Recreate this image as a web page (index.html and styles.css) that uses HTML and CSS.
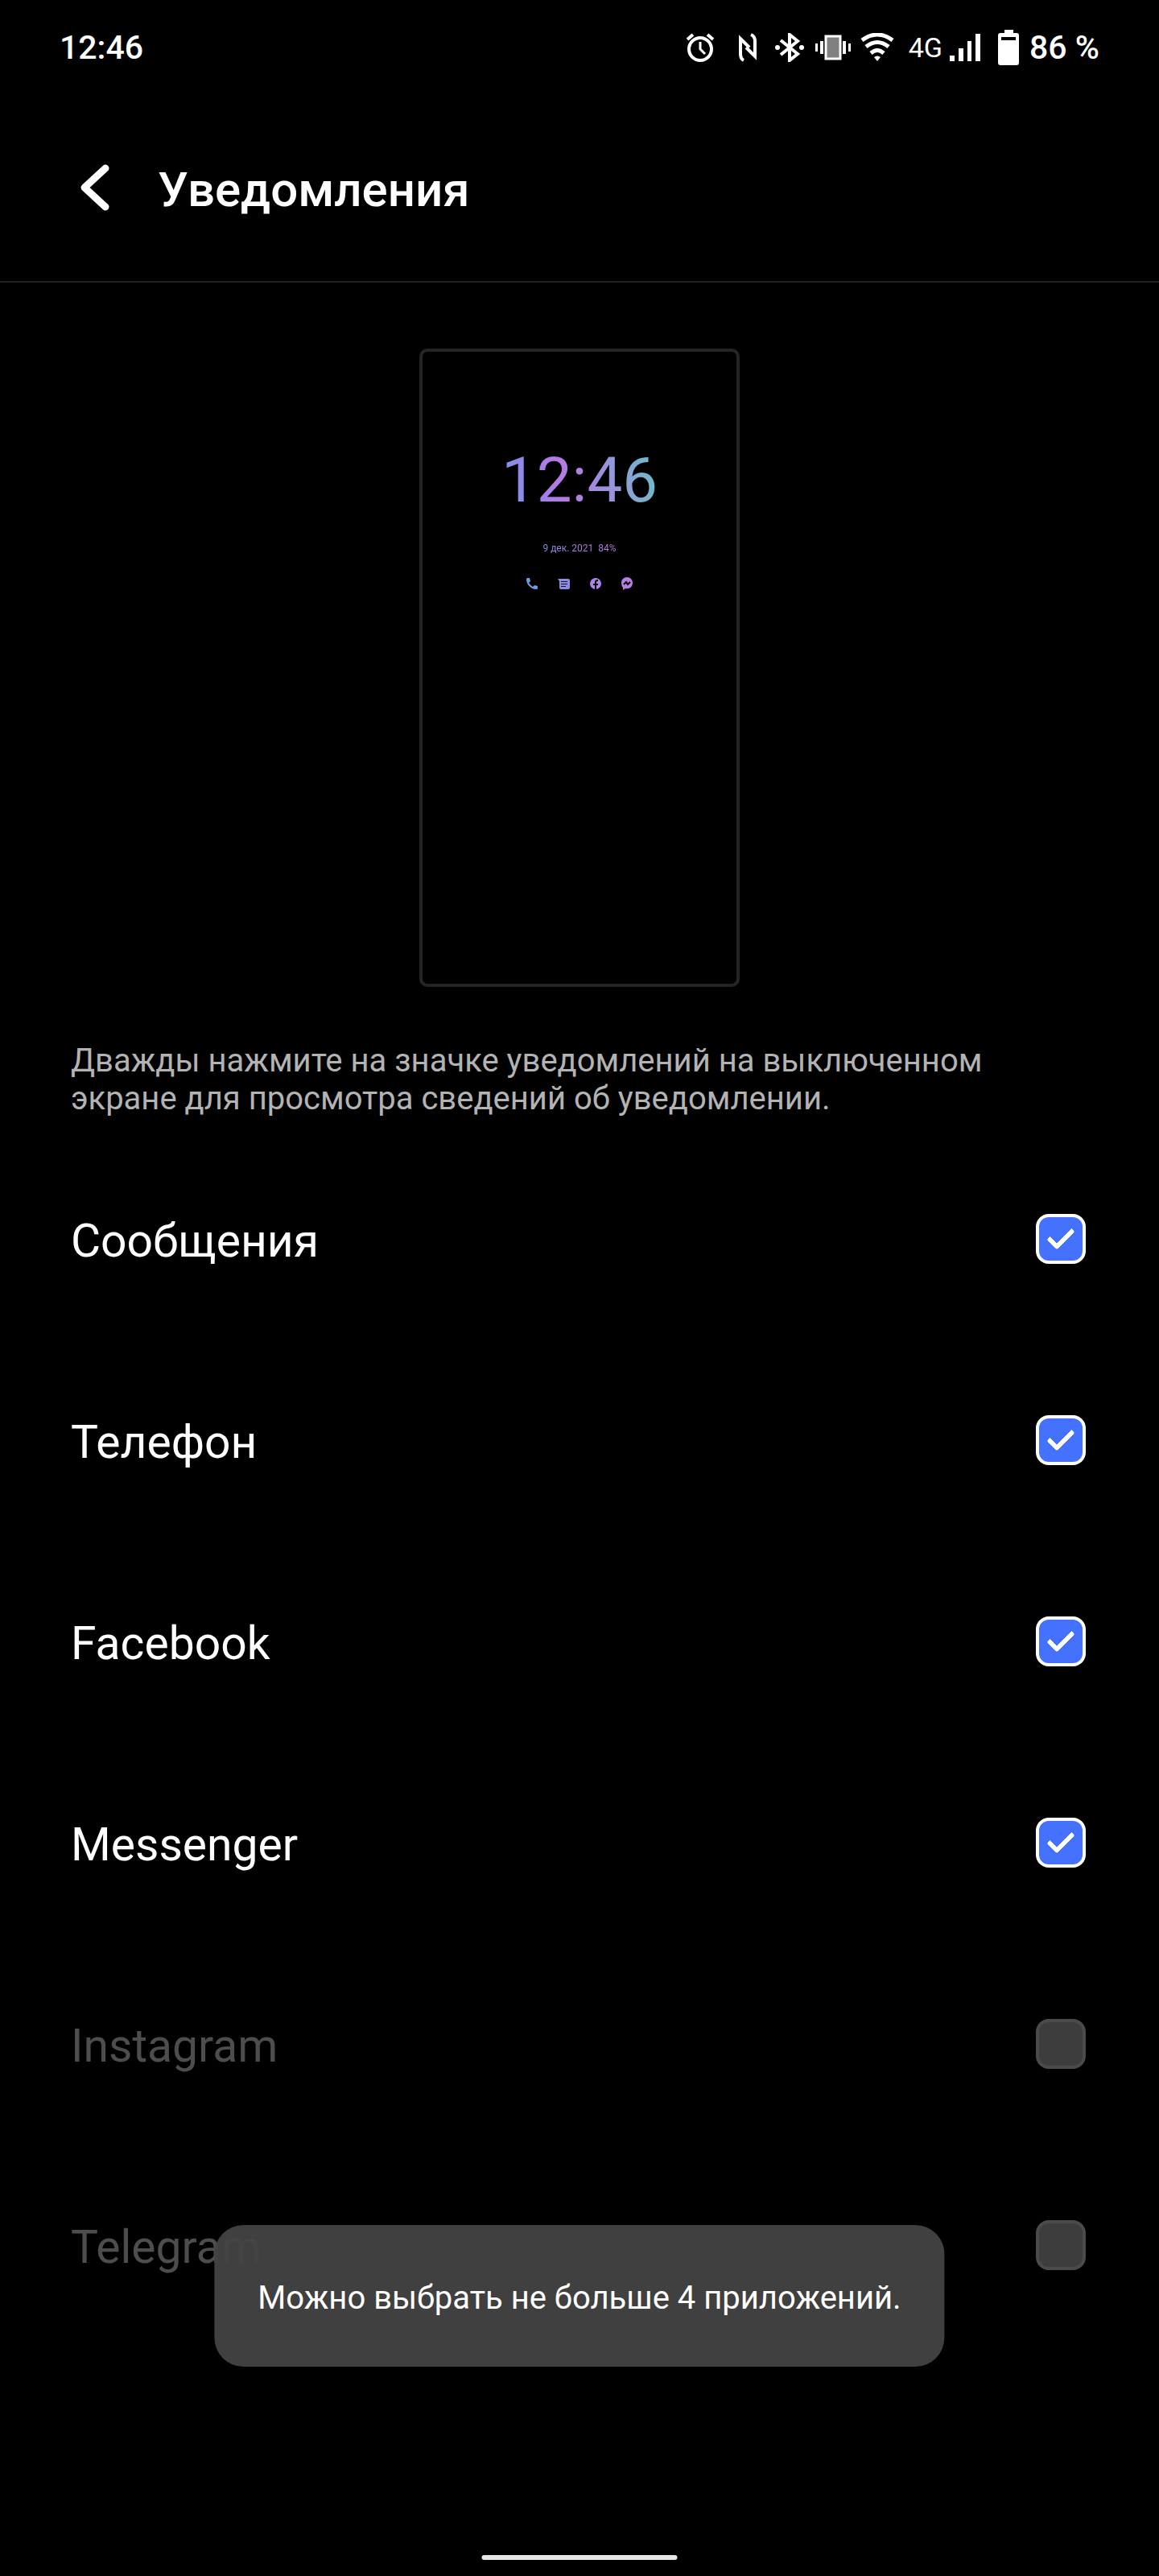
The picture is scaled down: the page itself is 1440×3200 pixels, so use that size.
FILE: index.html
```html
<!DOCTYPE html>
<html lang="ru">
<head>
    <meta charset="UTF-8">
    <meta name="viewport" content="width=device-width, initial-scale=1.0">
    <title>Уведомления</title>
    <link rel="stylesheet" href="styles.css">
</head>
<body>
    <!-- Status bar -->
    <div class="status-bar">
        <span class="time">12:46</span>
        <div class="status-icons">
            <svg class="alarm" width="36" height="36" viewBox="0 0 36 36" fill="none" stroke="#fff" stroke-width="4">
                <circle cx="18" cy="20" r="14"/>
                <path d="M18 11v9l6 6" stroke-width="3"/>
                <path d="M2 8l7-6M34 8l-7-6"/>
            </svg>
            <svg class="nfc" width="22" height="36" viewBox="0 0 22 36" fill="none" stroke="#fff" stroke-width="4">
                <path d="M6 34Q2 32 2 26V7L13 18"/>
                <path d="M15 2Q20 4 20 10V29L9 18"/>
            </svg>
            <svg class="bluetooth" width="36" height="36" viewBox="0 0 36 36" fill="none" stroke="#fff" stroke-width="4">
                <path d="M7 9l21 17-10 8V2l10 8L7 27"/>
                <circle cx="3" cy="18" r="3" fill="#fff" stroke="none"/>
                <circle cx="33" cy="18" r="3" fill="#fff" stroke="none"/>
            </svg>
            <svg class="vibrate" width="44" height="36" viewBox="0 0 44 36">
                <path d="M0 13h3v10H0zM6 10h4v16H6zM34 10h4v16h-4zM41 13h3v10h-3z" fill="#fff"/>
                <rect x="13" y="4" width="18" height="28" fill="#808080" stroke="#fff" stroke-width="3"/>
            </svg>
            <svg class="wifi" width="42" height="36" viewBox="0 0 42 36" fill="none" stroke="#fff" stroke-width="5">
                <path d="M2 9Q21-5 40 9M7 17Q21 6 35 17M13 25Q21 18 29 25"/>
                <path d="M17 30Q21 27 25 30L21 35z" fill="#fff" stroke="none"/>
            </svg>
            <span class="network">4G</span>
            <svg class="signal" width="38" height="36" viewBox="0 0 38 36" fill="#fff">
                <path d="M0 28h6v7H0zM11 19h6v16h-6zM22 10h5v25h-5zM32 1h6v34h-6z"/>
            </svg>
            <svg class="battery" width="26" height="44" viewBox="0 0 26 44">
                <path d="M8 0h11v4h4q3 0 3 3v34q0 3-3 3H3q-3 0-3-3V7q0-3 3-3h5z" fill="#fff"/>
                <path d="M4 9h18v4H4z" fill="#000"/>
            </svg>
            <span class="percent">86 %</span>
        </div>
    </div>

    <header>
        <button class="back" type="button" aria-label="Назад">
            <svg width="36" height="58" viewBox="0 0 36 58" fill="none" stroke="#fff" stroke-width="9" stroke-linecap="round" stroke-linejoin="round">
                <path d="M31 5L5 29l26 24"/>
            </svg>
        </button>
        <h1>Уведомления</h1>
    </header>

    <main>
        <!-- Always-on display preview -->
        <div class="preview">
            <div class="clock">12:46</div>
            <div class="date">9 дек. 2021&nbsp; 84%</div>
            <div class="apps">
                <svg width="14" height="14" viewBox="0 0 14 14" fill="#6f9ce0">
                    <path d="M1 0H4L5 4 3 6Q5 9 8 11L10 9 14 10V13Q14 14 12 14C6 14 0 8 0 2Q0 0 1 0z"/>
                </svg>
                <svg width="15" height="14" viewBox="0 0 15 14" fill="#8f8ce4">
                    <path d="M0 1H13Q15 1 15 3V12Q15 14 13 14H4Q2 14 2 12V4z"/>
                    <path d="M4 4.5h8M4 7.5h8M4 10.5h6" stroke="#15152c" stroke-width="1"/>
                </svg>
                <svg width="14" height="16" viewBox="0 0 14 16" fill="#ad82e8">
                    <circle cx="7" cy="8" r="7"/>
                    <path d="M7 16V6Q7 4 10 4M4 9h6" fill="none" stroke="#000" stroke-width="2"/>
                </svg>
                <svg width="14" height="16" viewBox="0 0 14 16" fill="#b57de6">
                    <path d="M7 0C3 0 0 3 0 7Q0 11 2 13V16L5 14C10 15 14 12 14 7 14 3 11 0 7 0z"/>
                    <path d="M3 9l3-3 2 3 3-3" fill="none" stroke="#000" stroke-width="2"/>
                </svg>
            </div>
        </div>

        <p class="hint">Дважды нажмите на значке уведомлений на выключенном экране для просмотра сведений об уведомлении.</p>

        <div class="app-list">
            <label class="row"><span>Сообщения</span> <input type="checkbox" checked></label>
            <label class="row"><span>Телефон</span> <input type="checkbox" checked></label>
            <label class="row"><span>Facebook</span> <input type="checkbox" checked></label>
            <label class="row"><span>Messenger</span> <input type="checkbox" checked></label>
            <label class="row disabled"><span>Instagram</span> <input type="checkbox" disabled></label>
            <label class="row disabled"><span>Telegram</span> <input type="checkbox" disabled></label>
        </div>
    </main>

    <div class="toast" role="status">Можно выбрать не больше 4 приложений.</div>
    <div class="home-bar"></div>
</body>
</html>
```
FILE: styles.css
```css
*,
*::before {
    box-sizing: border-box;
}

body {
    margin: 0;
    min-height: 100vh;
    position: relative;
    background-color: #000;
    color: #fff;
    font-family: Roboto, sans-serif;
}

svg {
    display: block;
}

/* Status bar */
.status-bar {
    display: flex;
    align-items: center;
    justify-content: space-between;
    height: 116px;
    padding: 2px 74px 0;
    font-size: 41px;
    font-weight: 500;
}

.status-icons {
    display: flex;
    align-items: center;
}

.nfc {
    margin-left: 30px;
}

.bluetooth {
    margin-left: 23px;
}

.vibrate {
    margin-left: 14px;
}

.wifi {
    margin-left: 12px;
}

.network {
    margin-left: 18px;
    font-size: 34px;
    font-weight: 400;
}

.signal {
    margin-left: 9px;
}

.battery {
    margin-left: 22px;
}

.percent {
    margin-left: 13px;
}

/* Title */
header {
    display: flex;
    align-items: center;
    height: 235px;
    padding: 0 100px;
    border-bottom: 2px solid #222;
}

.back {
    padding: 0;
    border: none;
    background: none;
    cursor: pointer;
}

h1 {
    margin: 0 0 0 60px;
    padding-top: 6px;
    font-size: 60px;
    font-weight: 500;
}

/* Lock screen preview */
.preview {
    width: 398px;
    height: 793px;
    margin: 82px auto 0;
    padding-top: 112px;
    border: 4px solid #252525;
    border-radius: 10px;
    text-align: center;
}

.clock {
    width: 200px;
    margin: 0 auto;
    font-size: 78px;
    line-height: 96px;
    color: transparent;
    background: linear-gradient(75deg, #6f9ce0 0%, #9685ec 22%, #b878e6 40%, #9a92da 65%, #74b6cc 90%);
    background-clip: text;
    -webkit-background-clip: text;
}

.date {
    width: 92px;
    margin: 27px auto 0;
    font-size: 12px;
    line-height: 18px;
    white-space: nowrap;
    color: transparent;
    background: linear-gradient(90deg, #7f92e0, #b07ce0 60%);
    background-clip: text;
    -webkit-background-clip: text;
}

.apps {
    display: flex;
    align-items: center;
    justify-content: center;
    gap: 25px;
    margin-top: 27px;
}

.hint {
    margin: 68px 88px 0;
    font-size: 40px;
    line-height: 47px;
    color: #b3b3b3;
}

/* App list */
.app-list {
    margin-top: 26px;
}

.row {
    display: flex;
    align-items: center;
    justify-content: space-between;
    height: 250px;
    padding: 0 91px 0 88px;
    font-size: 57px;
}

.row span {
    padding-top: 4px;
}

.row.disabled {
    color: #4d4d4d;
}

.row input {
    appearance: none;
    width: 62px;
    height: 62px;
    margin: 0;
    border: 4px solid #fff;
    border-radius: 16px;
    background-color: #4571ff;
}

.row input:checked::before {
    content: "";
    display: block;
    width: 32px;
    height: 18px;
    margin: 14px 0 0 11px;
    border-left: 6px solid #fff;
    border-bottom: 6px solid #fff;
    border-radius: 3px;
    transform: rotate(-45deg);
}

.row input:disabled {
    border-color: #4b4b4b;
    background-color: #3d3d3d;
}

/* Toast over the list */
.toast {
    position: absolute;
    bottom: 260px;
    left: 50%;
    transform: translateX(-50%);
    padding: 67px 54px 61px;
    border-radius: 36px;
    background-color: rgba(68, 68, 68, 0.94);
    font-size: 40px;
    line-height: 48px;
    white-space: nowrap;
}

.home-bar {
    position: absolute;
    bottom: 20px;
    left: 50%;
    width: 243px;
    height: 6px;
    transform: translateX(-50%);
    border-radius: 3px;
    background-color: #e8e8e8;
}
```
